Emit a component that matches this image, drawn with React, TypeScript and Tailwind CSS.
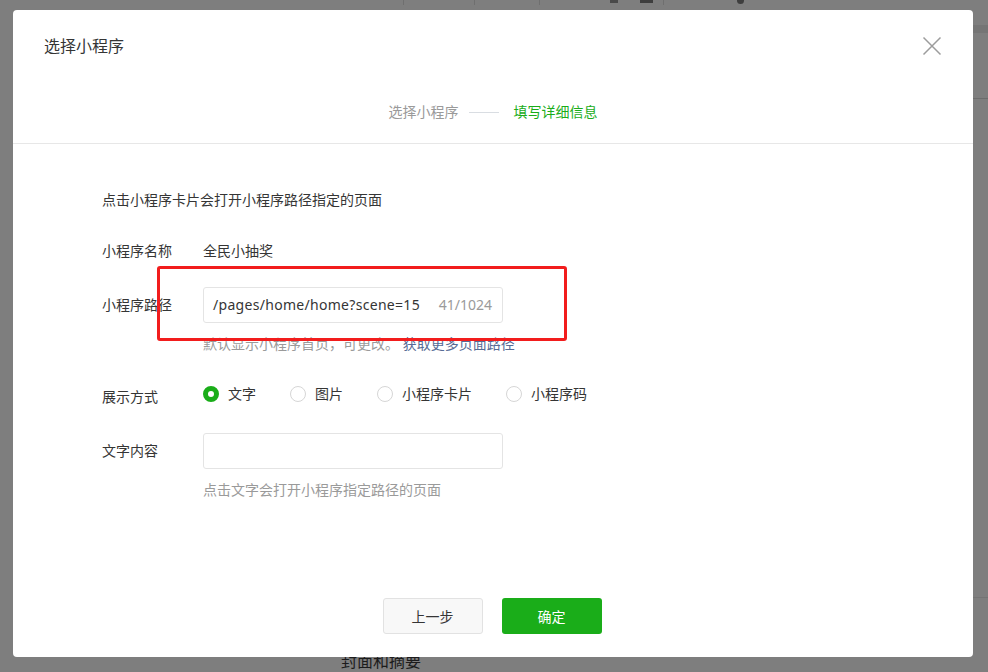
const font = { fontFamily: '"Noto Sans", "Noto Sans CJK SC", sans-serif' };

type RadioProps = { label: string; checked?: boolean };

function Radio({ label, checked }: RadioProps) {
    return (
        <label className="flex items-center gap-[9px] h-[20px]">
            {checked ? (
                <span className="w-[16px] h-[16px] rounded-full border-[5px] border-[#1aad19] bg-white" />
            ) : (
                <span className="w-[16px] h-[16px] rounded-full border border-[#d6d6d6] bg-white" />
            )}
            <span className="text-[14px] leading-[20px] text-[#353535]">{label}</span>
        </label>
    );
}

export default function App() {
    return (
        <div className="relative w-[988px] h-[672px] overflow-hidden bg-[#7e7e7e]" style={font}>
            {/* page behind the mask */}
            <div className="absolute inset-0">
                <div className="absolute left-[403px] top-0 w-px h-[5px] bg-[#6f6f6f]" />
                <div className="absolute left-[474px] top-0 w-px h-[5px] bg-[#6f6f6f]" />
                <div className="absolute left-[539px] top-0 w-px h-[5px] bg-[#6f6f6f]" />
                <div className="absolute left-[610px] top-0 w-[8px] h-[3px] bg-[#4a4a4a]" />
                <div className="absolute left-[640px] top-0 w-[13px] h-[3px] bg-[#3e3e3e]" />
                <div className="absolute left-[663px] top-0 w-px h-[5px] bg-[#6f6f6f]" />
                <div className="absolute left-[737px] top-0 w-[7px] h-[4px] rounded-b-full bg-[#3e3e3e]" />
                <div className="absolute left-[973px] top-[25px] w-[15px] h-[8px] bg-[#757575]" />
                <div className="absolute left-[973px] top-[98px] w-[15px] h-px bg-[#6c6c6c]" />
                <div className="absolute left-[973px] top-[597px] w-[15px] h-px bg-[#747474]" />
                <div className="absolute left-[341px] top-[651px] text-[16px] leading-[20px] text-[#1c1c1c]">封面和摘要</div>
            </div>

            {/* dialog */}
            <div className="absolute left-[13px] top-[10px] w-[960px] h-[647px] bg-white rounded-[4px] flex flex-col">
                <div className="pt-[24px] pb-[21px] border-b border-[#e7e7e7]">
                    <div className="flex items-center justify-between pl-[31px] pr-[31px] h-[24px]">
                        <div className="text-[16px] leading-[24px] text-[#353535]">选择小程序</div>
                        <svg width="20" height="20" viewBox="0 0 20 20" fill="none" stroke="#9c9c9c" strokeWidth="1.5">
                            <path d="M1.5 1.5 L18.5 18.5 M18.5 1.5 L1.5 18.5" />
                        </svg>
                    </div>
                    <div className="mt-[44px] flex items-center justify-center h-[20px] text-[14px] leading-[20px]">
                        <span className="text-[#9a9a9a]">选择小程序</span>
                        <span className="ml-[10px] mr-[15px] w-[30px] h-px bg-[#d9dde2]" />
                        <span className="text-[#1aad19]">填写详细信息</span>
                    </div>
                </div>

                <div className="pl-[89px] pt-[46px] text-[14px] leading-[20px] text-[#353535]">
                    <div>点击小程序卡片会打开小程序路径指定的页面</div>

                    <div className="mt-[31px] flex">
                        <div className="w-[101px]">小程序名称</div>
                        <div>全民小抽奖</div>
                    </div>

                    <div className="mt-[26px] flex items-center">
                        <div className="w-[101px]">小程序路径</div>
                        <div className="w-[300px] h-[36px] border border-[#e4e4e4] rounded-[3px] flex items-center pl-[9px] pr-[10px]">
                            <div className="whitespace-nowrap tracking-[0.3px] text-[#353535]">/pages/home/home?scene=15</div>
                            <div className="ml-auto text-[#9a9a9a]">41/1024</div>
                        </div>
                    </div>
                    <div className="mt-[11px] ml-[101px] text-[#9a9a9a]">
                        默认显示小程序首页，可更改。 <span className="text-[#576b95]">获取更多页面路径</span>
                    </div>

                    <div className="mt-[30px] flex">
                        <div className="w-[101px] pt-[3px]">展示方式</div>
                        <div className="flex gap-[34px]">
                            <Radio label="文字" checked />
                            <Radio label="图片" />
                            <Radio label="小程序卡片" />
                            <Radio label="小程序码" />
                        </div>
                    </div>

                    <div className="mt-[26px] flex items-center">
                        <div className="w-[101px]">文字内容</div>
                        <div className="w-[300px] h-[36px] border border-[#e4e4e4] rounded-[3px]" />
                    </div>
                    <div className="mt-[11px] ml-[101px] text-[#9a9a9a]">点击文字会打开小程序指定路径的页面</div>
                </div>

                <div className="flex-1" />

                <div className="pb-[23px] pr-[2px] flex justify-center gap-[19px] text-[14px]">
                    <button className="w-[100px] h-[36px] rounded-[3px] border border-[#e2e2e2] bg-[#f8f8f8] text-[#353535]">上一步</button>
                    <button className="w-[100px] h-[36px] rounded-[3px] bg-[#1aad19] text-white">确定</button>
                </div>
            </div>

            {/* annotation */}
            <div className="absolute left-[157px] top-[266px] w-[410px] h-[75px] border-[3px] border-[#f21d1d] rounded-[3px]" />
        </div>
    );
}
